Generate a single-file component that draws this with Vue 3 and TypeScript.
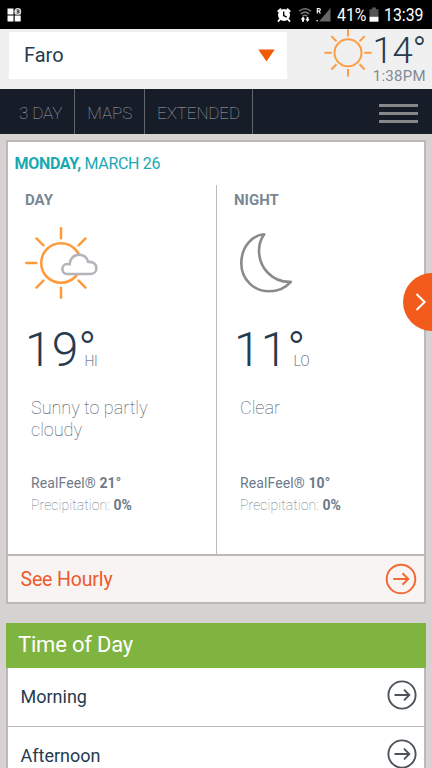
<script setup lang="ts">
interface Period {
  key: string
  label: string
  temp: number
  mark: string
  phrase: string
  realFeel: number
  precipitation: number
}

const tabs: string[] = ['3 DAY', 'MAPS', 'EXTENDED']
const rays: number[] = [0, 45, 90, 135, 180, 225, 270, 315]
const periods: Period[] = [
  { key: 'day', label: 'DAY', temp: 19, mark: 'HI', phrase: 'Sunny to partly cloudy', realFeel: 21, precipitation: 0 },
  { key: 'night', label: 'NIGHT', temp: 11, mark: 'LO', phrase: 'Clear', realFeel: 10, precipitation: 0 },
]
const times: string[] = ['Morning', 'Afternoon']
</script>

<template>
  <div class="screen">
    <div class="status">
      <svg class="apps" width="16" height="16" viewBox="0 0 16 16">
        <path d="M.5 1.500h6v6h-6zM.5 8.500h6v6h-6zM7.700 8.500h6v6h-6zM7.700 3.500h6v4h-6z" fill="#fff" />
        <circle cx="10.800" cy="4.300" r="3.400" fill="#ddd" />
        <path d="M9.600 3h2.300v3h-2.300M10 4.500h1.600" stroke="#222" stroke-width=".9" fill="none" />
      </svg>
      <div class="status-right">
        <svg width="16" height="16" viewBox="0 0 16 16">
          <circle cx="8" cy="8" r="6" fill="#fff" />
          <path d="M2.300 4.200L4.500 2.200M13.700 4.200L11.500 2.200M3.700 12.500l-1.200 1.500M12.300 12.500l1.200 1.500" stroke="#fff" stroke-width="2" stroke-linecap="round" />
          <path d="M7.700 4.500v4l3 1.600" stroke="#000" stroke-width="1.400" fill="none" />
        </svg>
        <svg class="wifi" width="14" height="16" viewBox="0 0 14 16">
          <path d="M1 4.300Q7-.8 13 4.300M2.800 7Q7 3.300 11.200 7M4.700 9.200Q7 7.300 9.300 9.200" stroke="#777" stroke-width="1.500" fill="none" />
          <path d="M5 9.500l2.300 3H6v2.300H4v-2.300H2.700zM9.500 15l-2-2.700h1.100V10h1.800v2.300h1.200z" fill="#fff" />
        </svg>
        <svg class="signal" width="15" height="16" viewBox="0 0 15 16">
          <path d="M14.500 1v13.500H3z" fill="#666" />
          <path d="M1.300 6.500V1.600h1.800a1.100 1.100 0 0 1 0 2.500H1.300M3 4.100l1.400 2.400" stroke="#fff" stroke-width="1.100" fill="none" />
          <circle cx="1.200" cy="13.800" r=".8" fill="#fff" />
        </svg>
        <span class="battery-text">41%</span>
        <svg class="battery" width="10" height="16" viewBox="0 0 10 16">
          <path d="M3 .5h4v1.700h2.500v7.500H.5V2.200H3z" fill="#555" />
          <path d="M.5 9.700h9v5h-9z" fill="#fff" />
        </svg>
        <span class="clock">13:39</span>
      </div>
    </div>

    <header class="header">
      <div class="select">
        <span>Faro</span>
        <svg width="17" height="13" viewBox="0 0 17 13"><path d="M.3.400h16.400L8.500 12.600z" fill="#f05a05" /></svg>
      </div>
      <svg class="sun" width="48" height="50" viewBox="0 0 48 50" fill="none" stroke="#fb9d45" stroke-width="2">
        <circle cx="24" cy="23.800" r="13.500" />
        <path v-for="angle in rays" :key="angle" d="M24 7.500V.2" :transform="`rotate(${angle} 24 23.800)`" />
      </svg>
      <div class="now">
        <span class="now-temp">14°</span>
        <span class="now-time">1:38PM</span>
      </div>
    </header>

    <nav class="nav">
      <span v-for="tab in tabs" :key="tab" class="tab">{{ tab }}</span>
      <span class="menu"><i></i><i></i><i></i></span>
    </nav>

    <main class="main">
      <section class="card">
        <h2 class="date"><b>MONDAY,</b> MARCH 26</h2>
        <div class="periods">
          <div v-for="period in periods" :key="period.key" class="period" :class="period.key">
            <h3>{{ period.label }}</h3>
            <svg v-if="period.key === 'day'" class="weather" width="76" height="76" viewBox="0 0 76 76" fill="none">
              <g stroke="#ff9a3c" stroke-width="2.500" stroke-linecap="round">
                <circle cx="37" cy="38" r="19.800" />
                <path v-for="angle in rays.filter(a => a !== 90)" :key="angle" d="M37 13.200V3.300" :transform="`rotate(${angle} 37 38)`" />
              </g>
              <path d="M43.600 49a5 5 0 0 1-.4-10c.7-.1 1.700 0 2.600.4-.3-5 3.900-9.800 9.200-9.800 5 0 8.500 3.500 9.100 7.400 4.800-.6 8.300 2 8.300 6.200 0 3.500-2.700 5.800-6 5.800z" fill="#fff" stroke="#b2b5b9" stroke-width="2.600" stroke-linejoin="round" />
            </svg>
            <svg v-else class="weather" width="76" height="76" viewBox="0 0 76 76" fill="none">
              <path d="M30.200 9.300C19.500 9.800 7.300 20.800 7.300 38.300c0 16.200 12.600 28 27.800 28 8.500 0 16.700-3.900 21.700-9.500C38.500 57.500 25 43 25 25.500c0-6.300 2.300-12.100 5.200-16.200z" stroke="#888b8c" stroke-width="2.600" stroke-linejoin="round" />
            </svg>
            <div class="temp"><span>{{ period.temp }}°</span><small>{{ period.mark }}</small></div>
            <p class="phrase">{{ period.phrase }}</p>
            <p class="detail">RealFeel® <b>{{ period.realFeel }}°</b></p>
            <p class="detail light">Precipitation: <b>{{ period.precipitation }}%</b></p>
          </div>
        </div>
        <div class="hourly">
          <span>See Hourly</span>
          <svg width="32" height="32" viewBox="0 0 32 32" fill="none" stroke="#f26a35" stroke-width="2">
            <circle cx="16" cy="16" r="14.300" /><path d="M8.300 16h15M17.500 10.300l5.800 5.700-5.800 5.700" />
          </svg>
        </div>
      </section>

      <section class="times">
        <h2>Time of Day</h2>
        <div v-for="time in times" :key="time" class="time">
          <span>{{ time }}</span>
          <svg width="30" height="30" viewBox="0 0 30 30" fill="none" stroke="#4d535a" stroke-width="1.900">
            <circle cx="15" cy="15" r="13.600" /><path d="M7.500 15H22M17 9.700l5.300 5.300-5.300 5.300" />
          </svg>
        </div>
      </section>
    </main>

    <button class="next" aria-label="Next">
      <svg width="12" height="20" viewBox="0 0 12 20" fill="none" stroke="#fff" stroke-width="2"><path d="M1.500 2L9.600 10l-8.100 8" /></svg>
    </button>
  </div>
</template>

<style>
body {
  margin: 0;
  overflow: hidden;
}
</style>

<style scoped>
.screen {
  position: relative;
  width: 432px;
  height: 768px;
  overflow: hidden;
  display: flex;
  flex-direction: column;
  background: #d6d2d1;
  font-family: Roboto, sans-serif;
  color: #263b4e;
}
svg { display: block; flex: none; }
h2, h3, p { margin: 0; font-weight: 400; }

.status {
  height: 29px;
  flex: none;
  box-sizing: border-box;
  display: flex;
  justify-content: space-between;
  align-items: center;
  padding: 0 8px 0 7px;
  background: #000;
  color: #fff;
}
.status-right { display: flex; align-items: center; }
.wifi { margin-left: 6px; }
.signal { margin-left: 4px; }
.battery { margin: 0 5px 0 4px; }
.battery-text,
.clock {
  font-size: 18px;
  line-height: 30px;
  transform: scaleX(0.88);
  transform-origin: left;
}
.battery-text { width: 28px; margin-left: 6px; }
.clock { width: 40px; }

.header {
  height: 60px;
  flex: none;
  box-sizing: border-box;
  display: flex;
  align-items: flex-start;
  padding-left: 9px;
  background: #f1f0f0;
}
.select {
  width: 278px;
  height: 47px;
  margin-top: 3px;
  box-sizing: border-box;
  display: flex;
  align-items: center;
  justify-content: space-between;
  padding: 0 12px 0 15px;
  background: #fff;
  font-size: 20px;
  line-height: 47px;
}
.sun { margin-left: 37px; }
.now {
  flex: 1;
  display: flex;
  flex-direction: column;
  align-items: flex-end;
  padding-right: 6px;
  margin-left: -10px;
}
.now-temp { font-size: 36.5px; line-height: 43px; font-weight: 300; letter-spacing: -0.3px; }
.now-time { font-size: 15px; line-height: 8px; letter-spacing: 0.3px; color: #808a95; }

.nav {
  height: 45px;
  flex: none;
  display: flex;
  background: #161d29;
}
.tab {
  padding: 1px 12px 0;
  border-right: 1px solid #62676e;
  font-size: 17px;
  line-height: 46px;
  letter-spacing: -0.1px;
  font-weight: 100;
  color: #a5a8ad;
}
.tab:first-child { padding-left: 19px; }
.menu {
  width: 39px;
  margin: 15px 14px 0 auto;
  display: flex;
  flex-direction: column;
  gap: 5px;
}
.menu i { height: 3px; background: #858789; }

.main { padding: 6px 6px 0; }
.card { border: 2px solid #bbb8b7; background: #fff; }
.date {
  height: 43px;
  padding-left: 6.500px;
  font-size: 16px;
  line-height: 43px;
  letter-spacing: -0.3px;
  color: #18aab0;
}
.date b { font-weight: 700; }
.periods { height: 369px; display: flex; }
.period {
  width: 208px;
  box-sizing: border-box;
  padding-left: 23px;
}
.night { border-left: 1px solid #bbb; }
.period h3 {
  margin-left: -6px;
  font-size: 15px;
  line-height: 30px;
  font-weight: 700;
  color: #7b8794;
}
.weather { margin: 10px 0 0 -7px; }
.night .weather { margin-left: -6px; }
.temp {
  height: 64px;
  margin: 16px 0 0 -6px;
  display: flex;
  align-items: baseline;
  font-size: 48px;
  line-height: 65px;
  font-weight: 300;
}
.temp small { margin-left: -12px; font-size: 14px; line-height: 14px; letter-spacing: -0.2px; color: #7b8794; }
.phrase {
  width: 140px;
  height: 44px;
  margin-top: 16px;
  font-size: 18px;
  line-height: 22px;
  font-weight: 100;
  color: #40505e;
}
.detail {
  font-size: 14px;
  line-height: 22px;
  letter-spacing: 0.1px;
  color: #6d7a87;
}
.phrase + .detail { margin-top: 31px; }
.light { font-weight: 100; }
.detail b { font-weight: 700; }
.hourly {
  height: 46px;
  border-top: 2px solid #bbb8b7;
  display: flex;
  align-items: center;
  justify-content: space-between;
  padding: 0 7px 0 12.500px;
  background: #f7f4f3;
  color: #ee5a2c;
  font-size: 19.5px;
  letter-spacing: -0.15px;
}
.times {
  margin-top: 19px;
  border: solid #bbb8b7;
  border-width: 0 2px;
  background: #fff;
}
.times h2 {
  margin: 0 -2px;
  height: 45px;
  padding-left: 12px;
  font-size: 22px;
  line-height: 43px;
  letter-spacing: -0.2px;
  background: #80b440;
  color: #fff;
}
.time {
  height: 58px;
  display: flex;
  align-items: center;
  justify-content: space-between;
  padding: 0 7px 0 12.500px;
  border-bottom: 1px solid #bbb8b7;
  font-size: 18px;
}
.time span { margin-top: -1px; }
.time svg { margin-top: -5px; }

.next {
  position: absolute;
  top: 273px;
  right: -29px;
  width: 58px;
  height: 58px;
  padding: 0 0 0 12px;
  border: 0;
  border-radius: 50%;
  background: #f35b1c;
}
</style>
